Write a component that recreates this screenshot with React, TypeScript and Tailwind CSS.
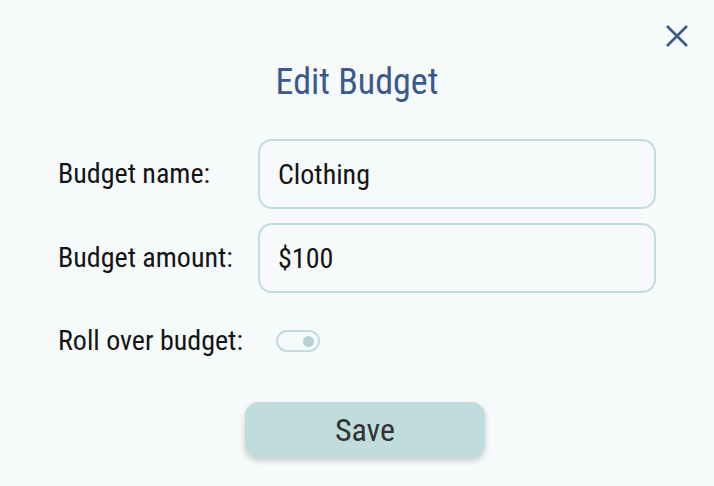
import { useState } from "react";

export default function App() {
  const [name, setName] = useState("Clothing");
  const [amount, setAmount] = useState("$100");
  const [rollOver, setRollOver] = useState(true);

  return (
    <div
      className="relative h-[486px] w-[714px] bg-[#f6fafb] font-stretch-condensed text-[#141414]"
      style={{ fontFamily: '"Roboto Condensed", Roboto, "Liberation Sans", sans-serif' }}
    >
      <button aria-label="Close" className="absolute right-[24px] top-[23px] text-[#3b5a8b]">
        <svg width="26" height="26" viewBox="0 0 26 26" fill="none" stroke="currentColor" strokeWidth="2.6">
          <path d="M3 3L23 23M23 3L3 23" />
        </svg>
      </button>

      <h1 className="pt-[60px] text-center text-[36px] leading-[44px] text-[#3b5a8b]">Edit Budget</h1>

      <form onSubmit={(e) => e.preventDefault()} className="mt-[35px] flex flex-col px-[58px]">
        <div className="grid grid-cols-[200px_1fr] gap-y-[14px]">
          <label htmlFor="budget-name" className="flex items-center text-[28px]">
            Budget name:
          </label>
          <input
            id="budget-name"
            value={name}
            onChange={(e) => setName(e.target.value)}
            className="h-[70px] rounded-[14px] border-2 border-[#c1dcdd] bg-transparent px-[18px] text-[28px] outline-none"
          />

          <label htmlFor="budget-amount" className="flex items-center text-[28px]">
            Budget amount:
          </label>
          <input
            id="budget-amount"
            value={amount}
            onChange={(e) => setAmount(e.target.value)}
            className="h-[70px] rounded-[14px] border-2 border-[#c1dcdd] bg-transparent px-[18px] text-[28px] outline-none"
          />
        </div>

        <div className="mt-[31px] flex h-[34px] items-center">
          <span className="w-[218px] text-[28px]">Roll over budget:</span>
          <button
            type="button"
            onClick={() => setRollOver(!rollOver)}
            className={`flex h-[22px] w-[44px] items-center rounded-full border-2 border-[#c1dcdd] px-[4px] ${rollOver ? "justify-end" : "justify-start"}`}
          >
            <span className="h-[11px] w-[11px] rounded-full bg-[#b3d4d5]" />
          </button>
        </div>

        <div className="mt-[44px] flex justify-center">
          <button
            type="submit"
            className="ml-[16px] h-[56px] w-[240px] rounded-[14px] bg-[#c1dcdd] text-[32px] text-[#333] shadow-[0_3px_6px_rgba(0,0,0,0.18)]"
          >
            Save
          </button>
        </div>
      </form>
    </div>
  );
}
